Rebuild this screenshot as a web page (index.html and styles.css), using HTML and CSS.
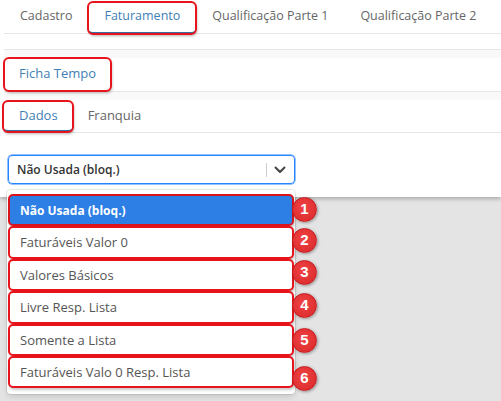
FILE: index.html
```html
<!DOCTYPE html>
<html lang="pt">
<head>
<meta charset="utf-8">
<link rel="stylesheet" href="styles.css">
</head>
<body>
<div class="page">
  <nav class="tabs">
    <div class="tab">Cadastro</div>
    <div class="tab active marked">Faturamento</div>
    <div class="tab">Qualificação Parte 1</div>
    <div class="tab">Qualificação Parte 2</div>
  </nav>
  <div class="band"></div>
  <div class="subtabs">
    <div class="stab active marked">Ficha Tempo</div>
  </div>
  <div class="subtabs second">
    <div class="stab active underlined marked">Dados</div>
    <div class="stab">Franquia</div>
  </div>
  <div class="content">
    <div class="select">
      <span class="value">Não Usada (bloq.)</span>
      <span class="sep"></span>
      <svg class="chev" width="12" height="8" viewBox="0 0 12 8"><path d="M1.5 1.5 L6 6 L10.5 1.5" fill="none" stroke="#444" stroke-width="2" stroke-linecap="round" stroke-linejoin="round"/></svg>
    </div>
  </div>
</div>
<ul class="menu">
  <li class="opt selected">Não Usada (bloq.)<span class="badge">1</span></li>
  <li class="opt">Faturáveis Valor 0<span class="badge">2</span></li>
  <li class="opt">Valores Básicos<span class="badge">3</span></li>
  <li class="opt">Livre Resp. Lista<span class="badge">4</span></li>
  <li class="opt">Somente a Lista<span class="badge">5</span></li>
  <li class="opt">Faturáveis Valo 0 Resp. Lista<span class="badge">6</span></li>
</ul>
</body>
</html>
```

FILE: styles.css
```css
* { box-sizing: border-box; }
html, body { margin: 0; padding: 0; }
body {
  background: #e4e4e4;
  font-family: "Open Sans", "Liberation Sans", sans-serif;
  font-size: 13px;
  color: #555;
  width: 501px;
  height: 401px;
  overflow: hidden;
  position: relative;
}
.page {
  background: #fff;
  height: 197px;
  padding-left: 4px;
  box-shadow: 0 2px 4px rgba(0,0,0,0.25);
  position: relative;
}
.tabs {
  display: flex;
  height: 34px;
  padding-top: 2px;
  border-bottom: 1px solid #e6e6e6;
  font-size: 12.5px;
}
.tab {
  padding: 0 16px;
  height: 32px;
  line-height: 28px;
  color: #666;
  white-space: nowrap;
}
.tab.active {
  color: #3f7fb5;
  border-bottom: 2px solid #2f6fa6;
}
.marked {
  outline: 2px solid #e8141b;
  outline-offset: -1px;
  border-radius: 5px;
  box-shadow: 1px 2px 3px rgba(0,0,0,0.3);
}
.band {
  height: 16px;
  border-bottom: 1px solid #e6e6e6;
}
.subtabs {
  display: flex;
  height: 42px;
  padding-top: 8px;
  background: linear-gradient(#f9f9f9 0 8px, #fff 8px);
  border-bottom: 1px solid #e6e6e6;
}
.subtabs.second { height: 41px; padding-top: 9px; }
.stab {
  padding: 0 15px;
  height: 33px;
  line-height: 31px;
  color: #666;
}
.stab.active { color: #3f7fb5; }
.subtabs.second .stab { height: 31px; line-height: 29px; }
.stab.underlined { border-bottom: 2px solid #2f6fa6; }
.subtabs.second .stab.active { margin-left: -1px; padding: 0 15px 0 16px; }
.content {
  padding: 22px 0 0 4px;
}
.select {
  width: 287px;
  height: 29px;
  border: 1px solid #2684ff;
  border-radius: 4px;
  display: flex;
  align-items: center;
  padding-left: 8px;
  box-shadow: 0 0 0 0.5px #2684ff;
}
.value {
  flex: 1;
  color: #333;
  font-weight: 600;
  font-size: 12px;
}
.sep {
  width: 1px;
  height: 14px;
  background: #ccc;
  margin-right: 7px;
}
.chev { margin-right: 8px; }
.menu {
  list-style: none;
  margin: 0;
  padding: 4px 1px 6px 1px;
  position: absolute;
  left: 7px;
  top: 190px;
  width: 288px;
  background: #fff;
  border-radius: 4px;
  box-shadow: 0 0 0 1px rgba(0,0,0,0.08), 0 3px 6px rgba(0,0,0,0.12);
}
.opt {
  position: relative;
  height: 32.4px;
  line-height: 29px;
  padding-left: 10px;
  border: 2px solid #e8141b;
  border-radius: 5px;
  color: #555;
  box-shadow: 1px 2px 3px rgba(0,0,0,0.22);
  background: #fff;
}
.opt.selected {
  background: #2d7fe6;
  color: #fff;
  font-weight: 700;
  font-size: 12px;
  border-color: #d9141b;
}
.badge {
  position: absolute;
  left: 100%;
  top: 1px;
  width: 25px;
  height: 25px;
  border-radius: 50%;
  background: radial-gradient(circle at 45% 40%, #f04343, #d8272a);
  border: 1.5px solid #c51b1f;
  box-shadow: 1px 1px 3px rgba(0,0,0,0.35);
  color: #fff;
  font-family: "Liberation Sans", Arial, sans-serif;
  font-weight: 700;
  font-size: 15px;
  line-height: 22px;
  text-align: center;
}
.opt:nth-child(2) .badge { top: 0px; }
.opt:nth-child(3) .badge { top: -1px; }
.opt:nth-child(4) .badge { top: 0px; }
.opt:nth-child(5) .badge { top: 2px; }
.opt:nth-child(6) .badge { top: 8px; }
```
